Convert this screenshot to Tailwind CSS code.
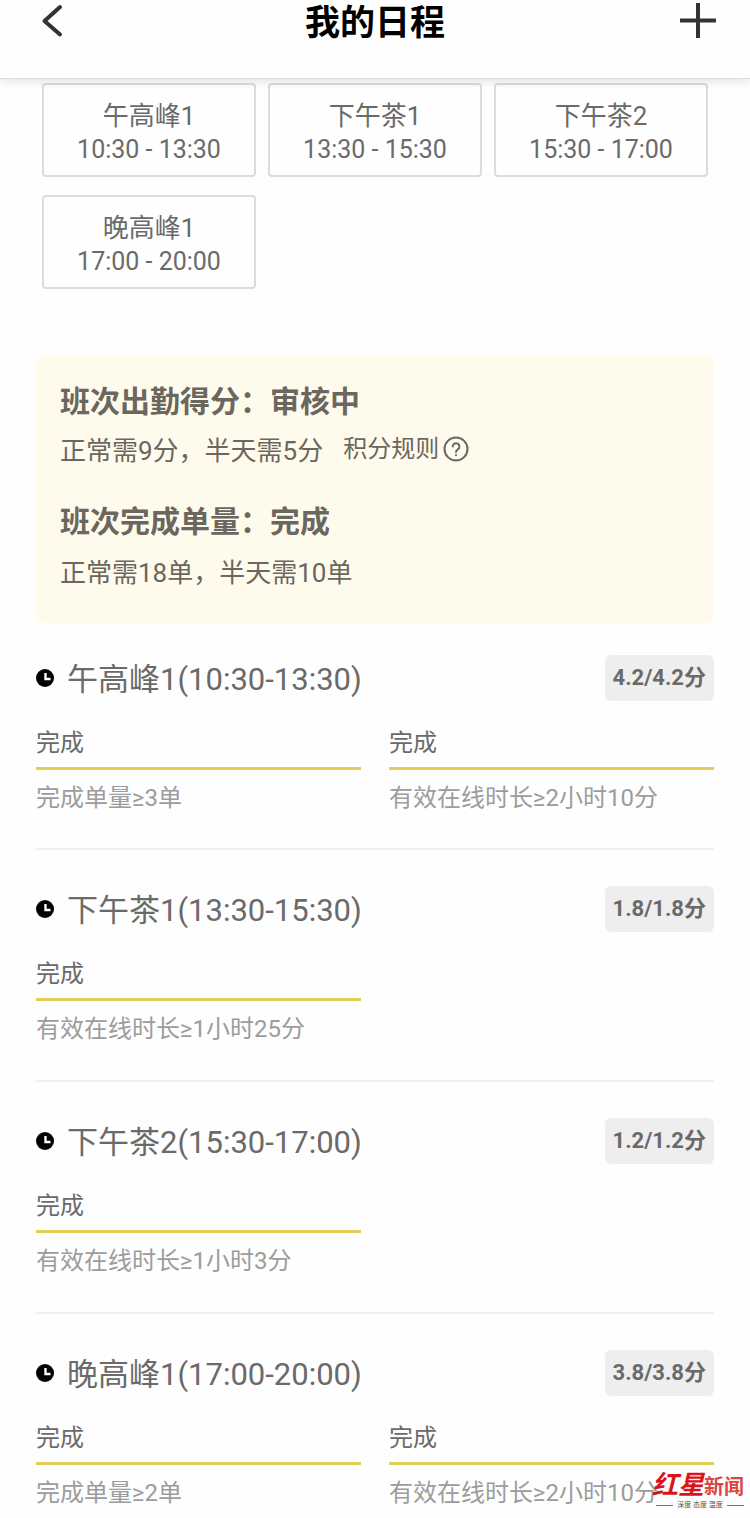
<!DOCTYPE html>
<html lang="zh-CN">
<head>
  <meta charset="UTF-8">
  <meta name="viewport" content="width=device-width, initial-scale=1.0">
  <title>我的日程</title>
  <script src="https://cdn.jsdelivr.net/npm/@tailwindcss/browser@4"></script>
</head>
<body class="bg-[#fefefe] text-[#6a6a6a] font-[Roboto,'Noto_Sans_CJK_SC',sans-serif]">

  <!-- Header -->
  <header class="sticky top-0 z-10 bg-[#fefefe] border-b border-[#dcdcdc] shadow-[0_2px_10px_rgba(0,0,0,0.12)] px-8 pb-9">
    <div class="flex items-center justify-between h-[42px]">
      <button type="button" aria-label="返回" class="w-10 h-10 flex items-center justify-center">
        <svg class="w-10 h-10" viewBox="0 0 40 40" fill="none" stroke="#333" stroke-width="4" stroke-linecap="round" stroke-linejoin="round"><path d="M28 6 12.500 20 28 33.500"/></svg>
      </button>
      <h1 class="pt-1.5 text-[35px] leading-[42px] font-bold text-black">我的日程</h1>
      <button type="button" aria-label="添加" class="w-10 h-10 flex items-center justify-center">
        <svg class="w-10 h-10" viewBox="0 0 40 40" fill="none" stroke="#333" stroke-width="4"><path d="M2 19.500h36M20 2v35"/></svg>
      </button>
    </div>
  </header>

  <main class="relative px-9">
    <!-- 时段 -->
    <section class="grid grid-cols-3 gap-x-3 gap-y-[18px] px-1.5 pt-1 text-center">
      <div class="h-[94px] pt-1.5 border-2 border-[#dcdcdc] rounded-sm flex flex-col justify-center">
        <p class="text-[26px] leading-[34px]">午高峰1</p>
        <p class="text-[25px] leading-[34px]">10:30 - 13:30</p>
      </div>
      <div class="h-[94px] pt-1.5 border-2 border-[#dcdcdc] rounded-sm flex flex-col justify-center">
        <p class="text-[26px] leading-[34px]">下午茶1</p>
        <p class="text-[25px] leading-[34px]">13:30 - 15:30</p>
      </div>
      <div class="h-[94px] pt-1.5 border-2 border-[#dcdcdc] rounded-sm flex flex-col justify-center">
        <p class="text-[26px] leading-[34px]">下午茶2</p>
        <p class="text-[25px] leading-[34px]">15:30 - 17:00</p>
      </div>
      <div class="h-[94px] pt-1.5 border-2 border-[#dcdcdc] rounded-sm flex flex-col justify-center">
        <p class="text-[26px] leading-[34px]">晚高峰1</p>
        <p class="text-[25px] leading-[34px]">17:00 - 20:00</p>
      </div>
    </section>

    <!-- 得分 -->
    <section class="mt-[66px] bg-[#fffbec] rounded-lg px-6 pt-6 pb-[30px] text-[#6b665e]">
      <h2 class="text-[30px] leading-[46px] font-bold">班次出勤得分：审核中</h2>
      <div class="flex items-start mt-1.5">
        <p class="text-[26px] leading-10">正常需9分，半天需5分</p>
        <button type="button" class="flex items-center gap-1 ml-5 text-2xl leading-9">
          积分规则
          <svg class="w-[26px] h-[26px]" viewBox="0 0 26 26" fill="none" stroke="currentColor" stroke-width="2" stroke-linecap="round"><circle cx="13" cy="13" r="11.500"/><path d="M9.800 10.500a3.300 3.300 0 1 1 5 2.800c-1.200.8-1.800 1.300-1.800 2.700"/><path d="M13 19v.2"/></svg>
        </button>
      </div>
      <h2 class="mt-7 text-[30px] leading-[46px] font-bold">班次完成单量：完成</h2>
      <p class="mt-2 text-[26px] leading-10">正常需18单，半天需10单</p>
    </section>

    <!-- 班次 -->
    <section class="mt-8">
      <article class="border-b-2 border-[#efefef] pb-[34px]">
        <div class="flex items-center h-[46px]">
          <svg class="w-[18px] h-[18px] mr-[13px]" viewBox="0 0 18 18"><circle cx="9" cy="9" r="9" fill="#000"/><path d="M9.500 4v6h5" fill="none" stroke="#fff" stroke-width="2.400"/></svg>
          <h3 class="pt-1 text-[31px] leading-[46px]">午高峰1(10:30-13:30)</h3>
          <span class="ml-auto bg-[#eee] rounded-md px-2 text-[22px] leading-[46px] font-bold">4.2/4.2分</span>
        </div>
        <div class="grid grid-cols-2 gap-7 mt-6">
          <div>
            <p class="text-2xl leading-9 pb-1.5 border-b-3 border-[#e3cf58]">完成</p>
            <p class="text-2xl leading-8 mt-3 text-[#9c9c9c]">完成单量≥3单</p>
          </div>
          <div>
            <p class="text-2xl leading-9 pb-1.5 border-b-3 border-[#e3cf58]">完成</p>
            <p class="text-2xl leading-8 mt-3 text-[#9c9c9c]">有效在线时长≥2小时10分</p>
          </div>
        </div>
      </article>

      <article class="border-b-2 border-[#efefef] pt-9 pb-[35px]">
        <div class="flex items-center h-[46px]">
          <svg class="w-[18px] h-[18px] mr-[13px]" viewBox="0 0 18 18"><circle cx="9" cy="9" r="9" fill="#000"/><path d="M9.500 4v6h5" fill="none" stroke="#fff" stroke-width="2.400"/></svg>
          <h3 class="pt-1 text-[31px] leading-[46px]">下午茶1(13:30-15:30)</h3>
          <span class="ml-auto bg-[#eee] rounded-md px-2 text-[22px] leading-[46px] font-bold">1.8/1.8分</span>
        </div>
        <div class="grid grid-cols-2 gap-7 mt-6">
          <div>
            <p class="text-2xl leading-9 pb-1.5 border-b-3 border-[#e3cf58]">完成</p>
            <p class="text-2xl leading-8 mt-3 text-[#9c9c9c]">有效在线时长≥1小时25分</p>
          </div>
        </div>
      </article>

      <article class="border-b-2 border-[#efefef] pt-9 pb-[35px]">
        <div class="flex items-center h-[46px]">
          <svg class="w-[18px] h-[18px] mr-[13px]" viewBox="0 0 18 18"><circle cx="9" cy="9" r="9" fill="#000"/><path d="M9.500 4v6h5" fill="none" stroke="#fff" stroke-width="2.400"/></svg>
          <h3 class="pt-1 text-[31px] leading-[46px]">下午茶2(15:30-17:00)</h3>
          <span class="ml-auto bg-[#eee] rounded-md px-2 text-[22px] leading-[46px] font-bold">1.2/1.2分</span>
        </div>
        <div class="grid grid-cols-2 gap-7 mt-6">
          <div>
            <p class="text-2xl leading-9 pb-1.5 border-b-3 border-[#e3cf58]">完成</p>
            <p class="text-2xl leading-8 mt-3 text-[#9c9c9c]">有效在线时长≥1小时3分</p>
          </div>
        </div>
      </article>

      <article class="pt-9">
        <div class="flex items-center h-[46px]">
          <svg class="w-[18px] h-[18px] mr-[13px]" viewBox="0 0 18 18"><circle cx="9" cy="9" r="9" fill="#000"/><path d="M9.500 4v6h5" fill="none" stroke="#fff" stroke-width="2.400"/></svg>
          <h3 class="pt-1 text-[31px] leading-[46px]">晚高峰1(17:00-20:00)</h3>
          <span class="ml-auto bg-[#eee] rounded-md px-2 text-[22px] leading-[46px] font-bold">3.8/3.8分</span>
        </div>
        <div class="grid grid-cols-2 gap-7 mt-6">
          <div>
            <p class="text-2xl leading-9 pb-1.5 border-b-3 border-[#e3cf58]">完成</p>
            <p class="text-2xl leading-8 mt-3 text-[#9c9c9c]">完成单量≥2单</p>
          </div>
          <div>
            <p class="text-2xl leading-9 pb-1.5 border-b-3 border-[#e3cf58]">完成</p>
            <p class="text-2xl leading-8 mt-3 text-[#9c9c9c]">有效在线时长≥2小时10分</p>
          </div>
        </div>
      </article>
    </section>

    <!-- Logo -->
    <div class="absolute right-1.5 bottom-0 w-[88px]">
      <div class="flex items-end justify-end leading-8 whitespace-nowrap">
        <span class="text-[26px] italic font-bold text-[#d8141c]">红星</span>
        <span class="text-[20px] leading-7 font-bold text-[#dc4540]">新闻</span>
      </div>
      <div class="flex items-center gap-1 text-[7px] leading-2 text-[#555] whitespace-nowrap">
        <span class="flex-1 h-px bg-[#777]"></span>
        深度 态度 温度
        <span class="flex-1 h-px bg-[#777]"></span>
      </div>
    </div>
  </main>

</body>
</html>
